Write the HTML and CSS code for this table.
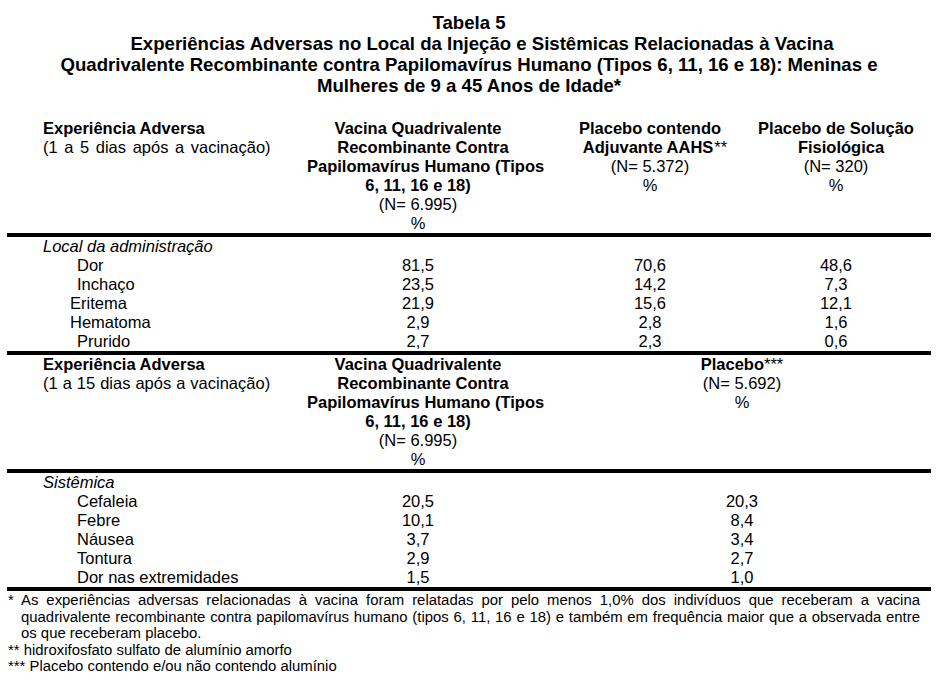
FILE: index.html
```html
<!DOCTYPE html>
<html lang="pt-BR">
<head>
<meta charset="utf-8">
<title>Tabela 5</title>
<link rel="stylesheet" href="styles.css">
</head>
<body>
<div class="page">
  <h1 class="title">
    <span class="title-line">Tabela 5</span>
    <span class="title-line shifted">Experiências Adversas no Local da Injeção e Sistêmicas Relacionadas à Vacina</span>
    <span class="title-line">Quadrivalente Recombinante contra Papilomavírus Humano (Tipos 6, 11, 16 e 18): Meninas e</span>
    <span class="title-line">Mulheres de 9 a 45 Anos de Idade*</span>
  </h1>

  <div class="data">
    <div class="grid head">
      <div class="c1"><b>Experiência Adversa</b><br><span class="wide">(1 a 5 dias após a vacinação)</span></div>
      <div class="cc"><b>Vacina Quadrivalente</b><br><b class="nudge">Recombinante Contra</b><br><b class="nudge">Papilomavírus Humano (Tipos</b><br><b>6, 11, 16 e 18)</b><br>(N= 6.995)<br>%</div>
      <div class="cc c3"><b>Placebo contendo</b><br><b class="nudge">Adjuvante AAHS</b><span class="nudge-end">**</span><br>(N= 5.372)<br>%</div>
      <div class="cc"><b>Placebo de Solução</b><br><b class="nudge">Fisiológica</b><br>(N= 320)<br>%</div>
    </div>
    <div class="rule"></div>
    <div class="grid rows">
      <div class="c1 group">Local da administração</div><div></div><div class="c3"></div><div></div>
      <div class="c1 item">Dor</div><div class="cc">81,5</div><div class="cc c3">70,6</div><div class="cc">48,6</div>
      <div class="c1 item">Inchaço</div><div class="cc">23,5</div><div class="cc c3">14,2</div><div class="cc">7,3</div>
      <div class="c1 item-alt">Eritema</div><div class="cc">21,9</div><div class="cc c3">15,6</div><div class="cc">12,1</div>
      <div class="c1 item-alt">Hematoma</div><div class="cc">2,9</div><div class="cc c3">2,8</div><div class="cc">1,6</div>
      <div class="c1 item">Prurido</div><div class="cc">2,7</div><div class="cc c3">2,3</div><div class="cc">0,6</div>
    </div>
    <div class="rule"></div>
    <div class="grid head">
      <div class="c1"><b>Experiência Adversa</b><br><span class="wide-s">(1 a 15 dias após a vacinação)</span></div>
      <div class="cc"><b>Vacina Quadrivalente</b><br><b class="nudge">Recombinante Contra</b><br><b class="nudge">Papilomavírus Humano (Tipos</b><br><b>6, 11, 16 e 18)</b><br>(N= 6.995)<br>%</div>
      <div class="cc span2"><b>Placebo</b><span>***</span><br>(N= 5.692)<br>%</div>
    </div>
    <div class="rule"></div>
    <div class="grid rows">
      <div class="c1 group">Sistêmica</div><div></div><div class="span2"></div>
      <div class="c1 item">Cefaleia</div><div class="cc">20,5</div><div class="cc span2">20,3</div>
      <div class="c1 item">Febre</div><div class="cc">10,1</div><div class="cc span2">8,4</div>
      <div class="c1 item">Náusea</div><div class="cc">3,7</div><div class="cc span2">3,4</div>
      <div class="c1 item">Tontura</div><div class="cc">2,9</div><div class="cc span2">2,7</div>
      <div class="c1 item">Dor nas extremidades</div><div class="cc">1,5</div><div class="cc span2">1,0</div>
    </div>
    <div class="rule"></div>
  </div>

  <div class="notes">
    <div class="note hang">
      <span class="mark">*</span>
      <div class="note-lines">
        <span class="jl">As experiências adversas relacionadas à vacina foram relatadas por pelo menos 1,0% dos indivíduos que receberam a vacina</span>
        <span class="jl">quadrivalente recombinante contra papilomavírus humano (tipos 6, 11, 16 e 18) e também em frequência maior que a observada entre</span>
        <span class="ll">os que receberam placebo.</span>
      </div>
    </div>
    <div class="note">** hidroxifosfato sulfato de alumínio amorfo</div>
    <div class="note">*** Placebo contendo e/ou não contendo alumínio</div>
  </div>
</div>
</body>
</html>
```

FILE: styles.css
```css
* {
  box-sizing: border-box;
}

body {
  margin: 0;
  background: #ffffff;
  color: #000000;
  font-family: "Liberation Sans", Arial, sans-serif;
}

.page {
  width: 924px;
  margin-left: 7px;
  padding-top: 12px;
}

.title {
  margin: 0 0 23px;
  font-size: 18.6px;
  line-height: 21px;
  font-weight: bold;
  text-align: center;
}

.title-line {
  display: block;
  white-space: nowrap;
}

.title-line.shifted {
  padding-left: 26px;
}

.data {
  font-size: 16.5px;
  line-height: 19px;
}

.grid {
  display: grid;
  grid-template-columns: 290px 242px 204px 186px;
}

.rule {
  height: 4px;
  background: #000000;
}

.c1 {
  padding-left: 36px;
  white-space: nowrap;
}

.wide {
  word-spacing: 2px;
}

.wide-s {
  word-spacing: 0.4px;
}

.cc {
  text-align: center;
  white-space: nowrap;
}

.c3 {
  padding-left: 18px;
}

.span2 {
  grid-column: span 2;
  padding-left: 16px;
}

.nudge {
  padding-left: 10px;
}

.nudge-end {
  padding-left: 1px;
}

.group {
  font-style: italic;
}

.item {
  padding-left: 70px;
}

.item-alt {
  padding-left: 63px;
}

.notes {
  width: 913px;
  padding-left: 1px;
  font-size: 14.9px;
  line-height: 16.5px;
  padding-top: 1px;
}

.note {
  white-space: nowrap;
}

.note.hang {
  display: flex;
  white-space: normal;
}

.mark {
  width: 13px;
  flex: none;
}

.note-lines {
  flex: 1;
}

.jl {
  display: block;
  text-align: justify;
  text-align-last: justify;
  white-space: nowrap;
}

.ll {
  display: block;
  white-space: nowrap;
}
```
